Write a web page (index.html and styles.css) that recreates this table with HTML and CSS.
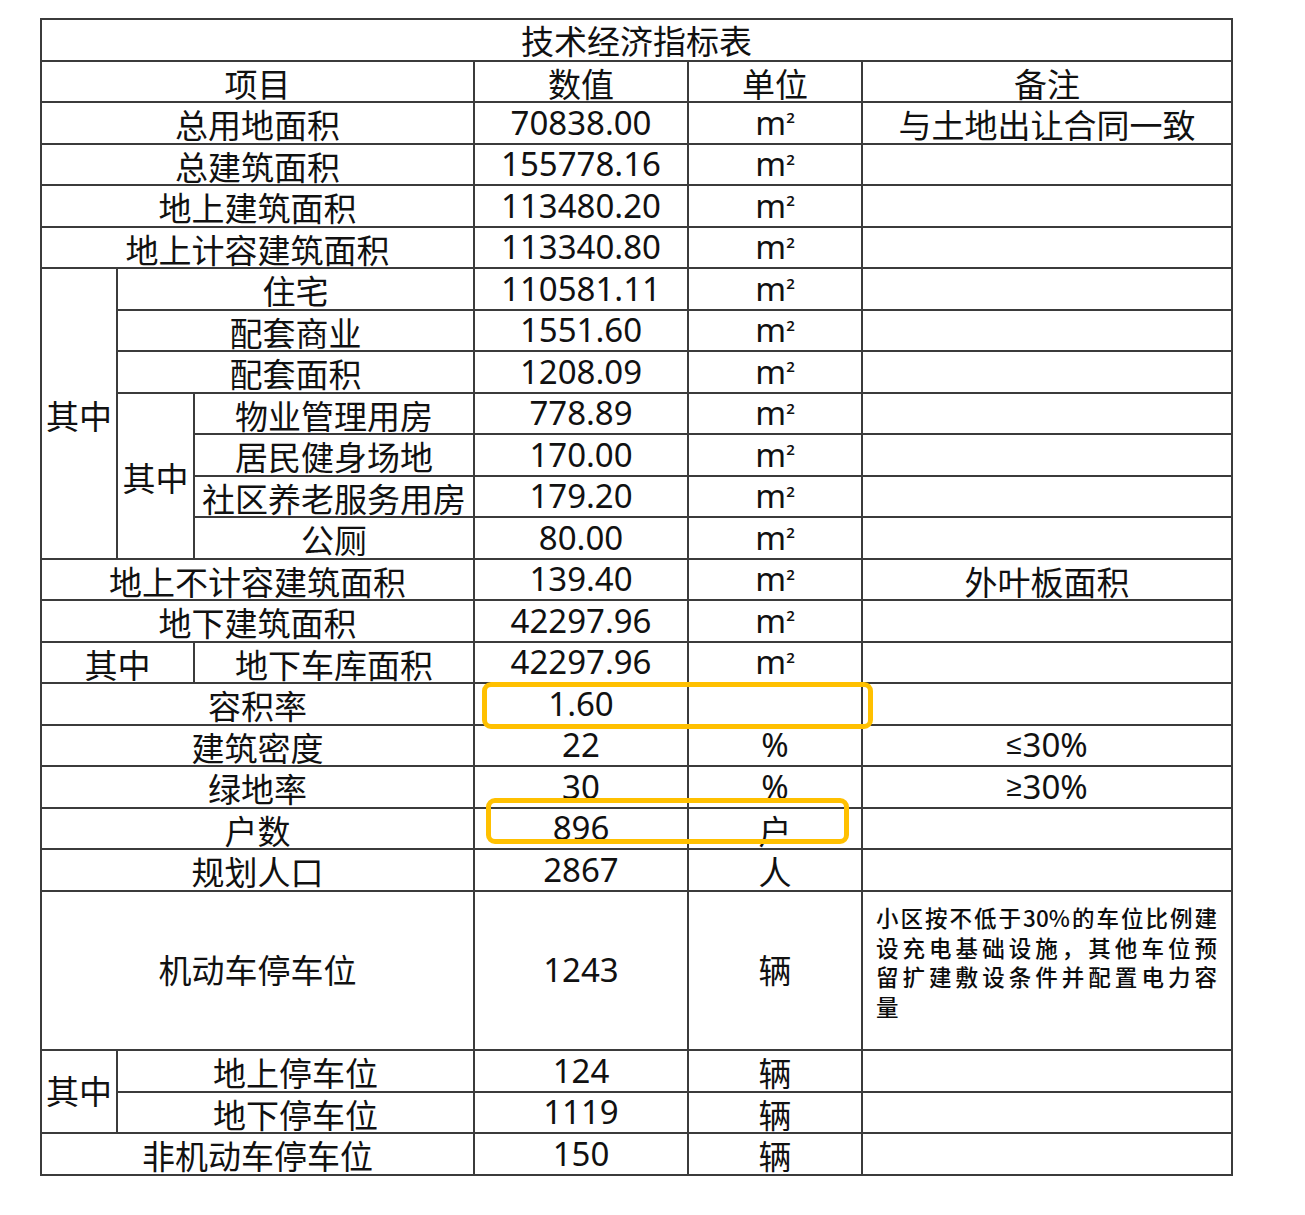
FILE: index.html
```html
<!DOCTYPE html>
<html lang="zh-CN">
<head>
<meta charset="utf-8">
<title>技术经济指标表</title>
<link rel="stylesheet" href="styles.css">
</head>
<body>
<div class="sheet">
  <div class="c span6 title">技术经济指标表</div>

  <div class="c span3">项目</div><div class="c">数值</div><div class="c">单位</div><div class="c">备注</div>

  <div class="c span3">总用地面积</div><div class="c num">70838.00</div><div class="c num">m<span class="sq">2</span></div><div class="c">与土地出让合同一致</div>
  <div class="c span3">总建筑面积</div><div class="c num">155778.16</div><div class="c num">m<span class="sq">2</span></div><div class="c"></div>
  <div class="c span3">地上建筑面积</div><div class="c num">113480.20</div><div class="c num">m<span class="sq">2</span></div><div class="c"></div>
  <div class="c span3">地上计容建筑面积</div><div class="c num">113340.80</div><div class="c num">m<span class="sq">2</span></div><div class="c"></div>

  <div class="c rows7">其中</div>
  <div class="c span2">住宅</div><div class="c num">110581.11</div><div class="c num">m<span class="sq">2</span></div><div class="c"></div>
  <div class="c span2">配套商业</div><div class="c num">1551.60</div><div class="c num">m<span class="sq">2</span></div><div class="c"></div>
  <div class="c span2">配套面积</div><div class="c num">1208.09</div><div class="c num">m<span class="sq">2</span></div><div class="c"></div>
  <div class="c rows4">其中</div>
  <div class="c">物业管理用房</div><div class="c num">778.89</div><div class="c num">m<span class="sq">2</span></div><div class="c"></div>
  <div class="c">居民健身场地</div><div class="c num">170.00</div><div class="c num">m<span class="sq">2</span></div><div class="c"></div>
  <div class="c">社区养老服务用房</div><div class="c num">179.20</div><div class="c num">m<span class="sq">2</span></div><div class="c"></div>
  <div class="c">公厕</div><div class="c num">80.00</div><div class="c num">m<span class="sq">2</span></div><div class="c"></div>

  <div class="c span3">地上不计容建筑面积</div><div class="c num">139.40</div><div class="c num">m<span class="sq">2</span></div><div class="c">外叶板面积</div>
  <div class="c span3">地下建筑面积</div><div class="c num">42297.96</div><div class="c num">m<span class="sq">2</span></div><div class="c"></div>
  <div class="c span2">其中</div><div class="c">地下车库面积</div><div class="c num">42297.96</div><div class="c num">m<span class="sq">2</span></div><div class="c"></div>

  <div class="c span3">容积率</div><div class="c num">1.60</div><div class="c"></div><div class="c"></div>
  <div class="c span3">建筑密度</div><div class="c num">22</div><div class="c num">%</div><div class="c num"><span class="cmp">≤</span>30%</div>
  <div class="c span3">绿地率</div><div class="c num">30</div><div class="c num">%</div><div class="c num"><span class="cmp">≥</span>30%</div>
  <div class="c span3">户数</div><div class="c num">896</div><div class="c">户</div><div class="c"></div>
  <div class="c span3">规划人口</div><div class="c num">2867</div><div class="c">人</div><div class="c"></div>

  <div class="c span3 mid">机动车停车位</div><div class="c num mid">1243</div><div class="c mid">辆</div>
  <div class="c note">
    <span class="ln">小区按不低于30%的车位比例建</span>
    <span class="ln">设充电基础设施，其他车位预</span>
    <span class="ln">留扩建敷设条件并配置电力容</span>
    <span class="ln last">量</span>
  </div>

  <div class="c rows2 mid">其中</div>
  <div class="c span2">地上停车位</div><div class="c num">124</div><div class="c">辆</div><div class="c"></div>
  <div class="c span2">地下停车位</div><div class="c num">1119</div><div class="c">辆</div><div class="c"></div>
  <div class="c span3">非机动车停车位</div><div class="c num">150</div><div class="c">辆</div><div class="c"></div>

  <div class="mark mark-ratio"></div>
  <div class="mark mark-house"></div>
</div>
</body>
</html>
```

FILE: styles.css
```css
html, body {
  margin: 0;
  background: #ffffff;
}

body {
  padding: 18px 0 0 40px;
  font-family: "Noto Sans", "Noto Sans CJK SC", sans-serif;
  color: #111111;
}

.sheet {
  position: relative;
  display: grid;
  width: max-content;
  grid-template-columns: 74px 75px 278px 212px 172px 368px;
  grid-template-rows: 40px repeat(10, 39px 40px) 157px 40px 39px 40px;
  gap: 2px;
  padding: 2px;
  background: #3b3b3b;
}

.c {
  background: #ffffff;
  display: flex;
  align-items: center;
  justify-content: center;
  font-size: 33px;
  line-height: 1;
  padding-top: 5px;
  box-sizing: border-box;
  white-space: nowrap;
}

.c.num {
  padding-top: 0;
  line-height: 1.1;
}

.c.mid {
  padding-top: 0;
}

.title {
  padding-top: 3px;
}

.sq {
  font-size: 15px;
  font-weight: 600;
  line-height: 1;
  align-self: flex-start;
  margin-top: 7px;
  margin-left: 0;
}

.cmp {
  font-family: "Liberation Sans", sans-serif;
  font-size: 28px;
  margin-right: 1px;
}

.span6 { grid-column: span 6; }
.span3 { grid-column: span 3; }
.span2 { grid-column: span 2; }
.rows7 { grid-row: span 7; }
.rows4 { grid-row: span 4; }
.rows2 { grid-row: span 2; }

.note {
  display: block;
  padding: 11px 14px 0 13px;
  font-family: "Noto Sans CJK SC", sans-serif;
  font-size: 22.5px;
  font-weight: 500;
  line-height: 29.5px;
  color: #0d0d0d;
  white-space: normal;
}

.note .ln {
  display: block;
  text-align: justify;
  text-align-last: justify;
}

.note .ln.last {
  text-align-last: left;
}

.mark {
  position: absolute;
  border: 5px solid #ffc000;
  border-radius: 9px;
  box-sizing: border-box;
  pointer-events: none;
}

.mark-ratio {
  left: 442px;
  top: 664px;
  width: 391px;
  height: 47px;
}

.mark-house {
  left: 446px;
  top: 780px;
  width: 363px;
  height: 46px;
}
```
